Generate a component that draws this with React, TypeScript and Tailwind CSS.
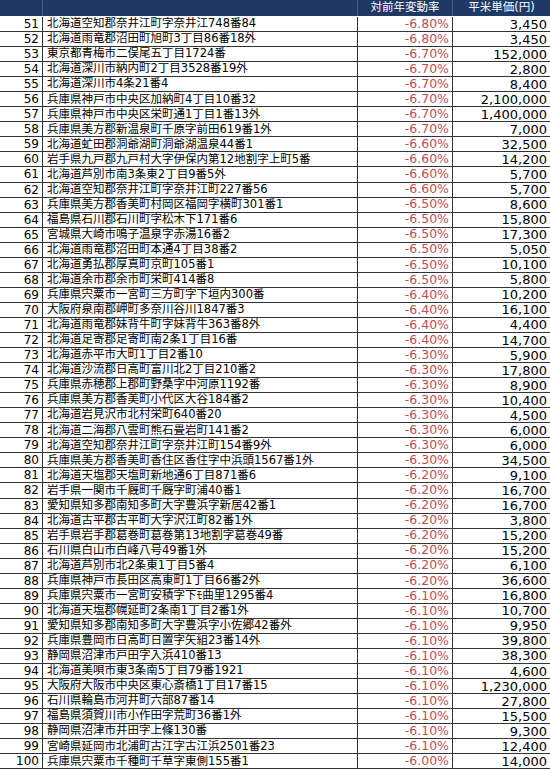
const rows: [number, string, string, string][] = [
  [51, '北海道空知郡奈井江町字奈井江748番84', '-6.80%', '3,450'],
  [52, '北海道雨竜郡沼田町旭町3丁目86番18外', '-6.80%', '3,450'],
  [53, '東京都青梅市二俣尾五丁目1724番', '-6.70%', '152,000'],
  [54, '北海道深川市納内町2丁目3528番19外', '-6.70%', '2,800'],
  [55, '北海道深川市4条21番4', '-6.70%', '8,400'],
  [56, '兵庫県神戸市中央区加納町4丁目10番32', '-6.70%', '2,100,000'],
  [57, '兵庫県神戸市中央区栄町通1丁目1番13外', '-6.70%', '1,400,000'],
  [58, '兵庫県美方郡新温泉町千原字前田619番1外', '-6.70%', '7,000'],
  [59, '北海道虻田郡洞爺湖町洞爺湖温泉44番1', '-6.60%', '32,500'],
  [60, '岩手県九戸郡九戸村大字伊保内第12地割字上町5番', '-6.60%', '14,200'],
  [61, '北海道芦別市南3条東2丁目9番5外', '-6.60%', '5,700'],
  [62, '北海道空知郡奈井江町字奈井江町227番56', '-6.60%', '5,700'],
  [63, '兵庫県美方郡香美町村岡区福岡字横町301番1', '-6.50%', '8,600'],
  [64, '福島県石川郡石川町字松木下171番6', '-6.50%', '15,800'],
  [65, '宮城県大崎市鳴子温泉字赤湯16番2', '-6.50%', '17,300'],
  [66, '北海道雨竜郡沼田町本通4丁目38番2', '-6.50%', '5,050'],
  [67, '北海道勇払郡厚真町京町105番1', '-6.50%', '10,100'],
  [68, '北海道余市郡余市町栄町414番8', '-6.50%', '5,800'],
  [69, '兵庫県宍粟市一宮町三方町字下垣内300番', '-6.40%', '10,200'],
  [70, '大阪府泉南郡岬町多奈川谷川1847番3', '-6.40%', '16,100'],
  [71, '北海道雨竜郡妹背牛町字妹背牛363番8外', '-6.40%', '4,400'],
  [72, '北海道足寄郡足寄町南2条1丁目16番', '-6.40%', '14,700'],
  [73, '北海道赤平市大町1丁目2番10', '-6.30%', '5,900'],
  [74, '北海道沙流郡日高町富川北2丁目210番2', '-6.30%', '17,800'],
  [75, '兵庫県赤穂郡上郡町野桑字中河原1192番', '-6.30%', '8,900'],
  [76, '兵庫県美方郡香美町小代区大谷184番2', '-6.30%', '10,400'],
  [77, '北海道岩見沢市北村栄町640番20', '-6.30%', '4,500'],
  [78, '北海道二海郡八雲町熊石畳岩町141番2', '-6.30%', '6,000'],
  [79, '北海道空知郡奈井江町字奈井江町154番9外', '-6.30%', '6,000'],
  [80, '兵庫県美方郡香美町香住区香住字中浜頭1567番1外', '-6.30%', '34,500'],
  [81, '北海道天塩郡天塩町新地通6丁目871番6', '-6.20%', '9,100'],
  [82, '岩手県一関市千厩町千厩字町浦40番1', '-6.20%', '16,700'],
  [83, '愛知県知多郡南知多町大字豊浜字新居42番1', '-6.20%', '16,700'],
  [84, '北海道古平郡古平町大字沢江町82番1外', '-6.20%', '3,800'],
  [85, '岩手県岩手郡葛巻町葛巻第13地割字葛巻49番', '-6.20%', '15,200'],
  [86, '石川県白山市白峰八号49番1外', '-6.20%', '15,200'],
  [87, '北海道芦別市北2条東1丁目5番4', '-6.20%', '6,100'],
  [88, '兵庫県神戸市長田区高東町1丁目66番2外', '-6.20%', '36,600'],
  [89, '兵庫県宍粟市一宮町安積字下ﾓ曲里1295番4', '-6.10%', '16,800'],
  [90, '北海道天塩郡幌延町2条南1丁目2番1外', '-6.10%', '10,700'],
  [91, '愛知県知多郡南知多町大字豊浜字小佐郷42番外', '-6.10%', '9,950'],
  [92, '兵庫県豊岡市日高町日置字矢組23番14外', '-6.10%', '39,800'],
  [93, '静岡県沼津市戸田字入浜410番13', '-6.10%', '38,300'],
  [94, '北海道美唄市東3条南5丁目79番1921', '-6.10%', '4,600'],
  [95, '大阪府大阪市中央区東心斎橋1丁目17番15', '-6.10%', '1,230,000'],
  [96, '石川県輪島市河井町六部87番14', '-6.10%', '27,800'],
  [97, '福島県須賀川市小作田字荒町36番1外', '-6.10%', '15,500'],
  [98, '静岡県沼津市井田字上條130番', '-6.10%', '9,300'],
  [99, '宮崎県延岡市北浦町古江字古江浜2501番23', '-6.10%', '12,400'],
  [100, '兵庫県宍粟市千種町千草字東側155番1', '-6.00%', '14,000'],
];

export default function App() {
  return (
    <div className="w-[550px] h-[771px] bg-white overflow-hidden font-['DejaVu_Sans','Noto_Sans_CJK_JP',sans-serif] text-[11.5px] text-black">
      <div className="grid grid-cols-[43px_315px_95px_1fr] h-[17px] bg-[#203864] text-white border-b border-white">
        <div className="border-r border-[#4a5f86]" />
        <div className="border-r border-[#4a5f86]" />
        <div className="flex items-center justify-center border-r border-[#4a5f86] leading-none">対前年変動率</div>
        <div className="flex items-center justify-center leading-none">平米単価(円)</div>
      </div>
      {rows.map(([no, addr, rate, price]) => (
        <div key={no} className="grid grid-cols-[43px_315px_95px_1fr] h-[15.05px] border-b border-[#333] leading-none">
          <div className="flex items-center justify-end pr-[3px] border-r border-[#333] text-[12px]">{no}</div>
          <div className="flex items-center pl-[4px] border-r border-[#333] whitespace-nowrap overflow-hidden">{addr}</div>
          <div className="flex items-center justify-end pr-[3px] border-r border-[#333] text-[12.5px] text-[#c0504d]">{rate}</div>
          <div className="flex items-center justify-end pr-[3px] text-[13px]">{price}</div>
        </div>
      ))}
    </div>
  );
}
